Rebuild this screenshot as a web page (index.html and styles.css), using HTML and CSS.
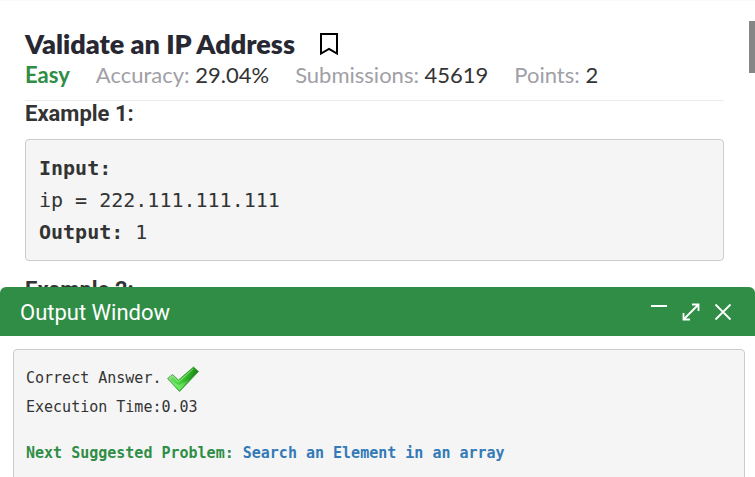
FILE: index.html
```html
<!DOCTYPE html>
<html lang="en">
<head>
<meta charset="utf-8">
<title>Validate an IP Address</title>
<link rel="stylesheet" href="styles.css">
</head>
<body>
<main class="problem">
  <header class="problem-head">
    <div class="title-row">
      <h1>Validate an IP Address</h1>
      <button class="icon-button bookmark" type="button" aria-label="Bookmark">
        <svg width="20" height="24" viewBox="0 0 20 24" fill="none" stroke="#000" stroke-width="2"><path d="M2 2H18V21.500L10 17L2 21.500Z"/></svg>
      </button>
    </div>
    <div class="stats">
      <strong class="level">Easy</strong>
      <span class="stat">Accuracy: <b>29.04%</b></span>
      <span class="stat">Submissions: <b>45619</b></span>
      <span class="stat">Points: <b>2</b></span>
    </div>
  </header>
  <h2>Example 1:</h2>
  <pre class="example"><b>Input:</b>
ip = 222.111.111.111
<b>Output:</b> 1</pre>
  <h2>Example 2:</h2>
  <div class="scroll-thumb"></div>
</main>
<section class="output">
  <header class="output-bar">
    <h2>Output Window</h2>
    <div class="output-actions">
      <button class="icon-button" type="button" aria-label="Minimize">
        <svg width="18" height="18" viewBox="0 0 18 18" fill="none" stroke="#fff" stroke-width="2"><path d="M1 3H17"/></svg>
      </button>
      <button class="icon-button" type="button" aria-label="Expand">
        <svg width="18" height="18" viewBox="0 0 18 18" fill="none" stroke="#fff" stroke-width="1.800"><path d="M2 16L16 2M10 1.500H16.500V8M1.500 10V16.500H8"/></svg>
      </button>
      <button class="icon-button" type="button" aria-label="Close">
        <svg width="18" height="18" viewBox="0 0 18 18" fill="none" stroke="#fff" stroke-width="1.800"><path d="M1.500 1.500L16.500 16.500M16.500 1.500L1.500 16.500"/></svg>
      </button>
    </div>
  </header>
  <div class="result">
    <p class="verdict">Correct Answer.
      <svg width="34" height="28" viewBox="0 0 34 28" aria-hidden="true">
        <defs>
          <linearGradient id="tick" x1="0" y1="0.300" x2="1" y2="0.600">
            <stop offset="0" stop-color="#8fda88"/><stop offset="0.400" stop-color="#49d83f"/><stop offset="0.700" stop-color="#25a51d"/><stop offset="1" stop-color="#17600f"/>
          </linearGradient>
          <linearGradient id="glow" x1="0" y1="0" x2="0" y2="1">
            <stop offset="0" stop-color="#fff" stop-opacity="0"/><stop offset="1" stop-color="#5cff50" stop-opacity="0.800"/>
          </linearGradient>
        </defs>
        <path d="M1.500 13.500L6.500 9.500L12.500 15L27.500 2L32.500 6.500L13.500 26.500Z" fill="url(#tick)" stroke="#318b29" stroke-opacity="0.700" stroke-linejoin="round"/>
        <path d="M4 15L12.500 20L24 14L13.500 25.500Z" fill="url(#glow)"/>
        <path d="M3 13.500L6.500 11L12.500 17L27 4" fill="none" stroke="#c4f4bd" stroke-opacity="0.600"/>
      </svg>
    </p>
    <p>Execution Time:0.03</p>
    <p class="next">Next Suggested Problem: <a href="#">Search an Element in an array</a></p>
  </div>
</section>
</body>
</html>
```
FILE: styles.css
```css
* { box-sizing: border-box; }

body {
  margin: 0;
  height: 100vh;
  display: flex;
  flex-direction: column;
  overflow: hidden;
  background: #fff;
  color: #333;
  font-family: Roboto, sans-serif;
}

h1, h2, p, pre { margin: 0; }

.icon-button {
  display: flex;
  padding: 0;
  border: 0;
  background: none;
  cursor: pointer;
}

.problem {
  position: relative;
  flex: 1;
  min-height: 0;
  overflow: hidden;
  padding: 27px 31px 0 25px;
  border-top: 1px solid #fafafa;
}

.problem-head {
  padding-bottom: 10px;
  border-bottom: 1px solid #ebebeb;
  font-family: Lato, sans-serif;
}

.title-row {
  display: flex;
  align-items: center;
  gap: 24px;
}

h1 {
  color: #282833;
  font-size: 27px;
  font-weight: 800;
  line-height: 32px;
}

.stats {
  display: flex;
  gap: 26px;
  color: #a0a0a6;
  font-size: 22px;
  line-height: 30px;
  white-space: nowrap;
}

.level { color: #2f8d46; }
.stat b { color: #333; font-weight: 400; }

.problem h2 {
  font-size: 22px;
  line-height: 26px;
}

.example {
  margin: 12px 0 16px;
  padding: 12px 13px;
  border: 1px solid #ccc;
  border-radius: 4px;
  background: #f5f5f5;
  font: 20px/32px "DejaVu Sans Mono", monospace;
}

.scroll-thumb {
  position: absolute;
  top: 20px;
  right: 0;
  width: 6px;
  height: 52px;
  background: #868686;
}

.output {
  flex: none;
  height: 190px;
  overflow: hidden;
}

.output-bar {
  display: flex;
  align-items: center;
  justify-content: space-between;
  padding: 0 23px 0 20px;
  border-radius: 6px 6px 0 0;
  background: #2f8d46;
  color: #fff;
}

.output-bar h2 {
  padding-top: 3px;
  font-size: 22px;
  font-weight: 400;
  line-height: 46px;
}

.output-actions { display: flex; gap: 14px; }

.result {
  margin: 13px 10px 0 13px;
  padding: 14px 12px 40px;
  border: 1px solid #ccc;
  border-radius: 4px;
  background: #f5f5f5;
  font: 15px/29px "DejaVu Sans Mono", monospace;
}

.verdict { display: flex; align-items: center; gap: 5px; }

.next {
  margin-top: 17px;
  color: #2f8d46;
  font-weight: 700;
}

.next a { color: #337ab7; text-decoration: none; }
```
